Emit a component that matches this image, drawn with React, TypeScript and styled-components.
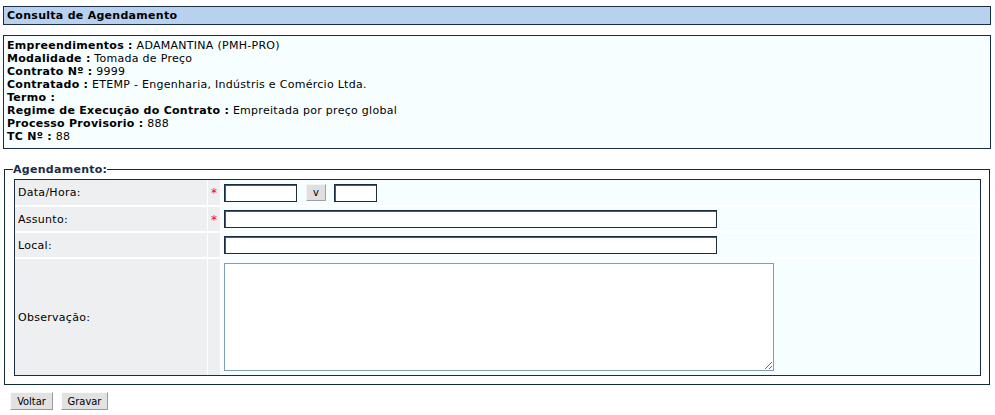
import React from "react";
import styled, { createGlobalStyle } from "styled-components";

const Global = createGlobalStyle`
  html, body { margin: 0; padding: 0; background: #ffffff; }
  body { font-family: "DejaVu Sans", Verdana, sans-serif; font-size: 11px; color: #000; letter-spacing: 0.28px; }
`;

const Page = styled.div`
  padding: 6px 4px 0 3px;
  width: 988px;
`;

const TitleBar = styled.div`
  box-sizing: border-box;
  height: 19px;
  border: 1px solid #1b2d44;
  background: #b8d1ee;
  font-weight: bold;
  font-size: 11px;
  line-height: 17px;
  padding-left: 3px;
`;

const InfoBox = styled.div`
  box-sizing: border-box;
  margin-top: 10px;
  height: 114px;
  border: 1px solid #1b2d44;
  background: #f7feff;
  padding: 3px 3px;
  line-height: 13px;
`;

const InfoLine = styled.div`
  white-space: nowrap;
`;

const Key = styled.b`
  font-weight: bold;
`;

const Fieldset = styled.fieldset`
  box-sizing: border-box;
  margin: 14px 0 0 1px;
  width: 986px;
  border: 1px solid #102c2e;
  padding: 3px 8px 8px 9px;
  min-width: 0;
`;

const Legend = styled.legend`
  font-weight: bold;
  color: #1b2d44;
  padding: 0;
  margin-left: -1px;
`;

const Grid = styled.div`
  box-sizing: border-box;
  border: 1px solid #1b2d44;
  display: grid;
  grid-template-columns: 192px 12px 1fr;
  grid-template-rows: 25px 24px 24px 116px;
  column-gap: 1px;
  row-gap: 2px;
  background: #ffffff;
`;

const LabelCell = styled.div`
  background: #eeeff1;
  display: flex;
  align-items: center;
  padding-left: 3px;
`;

const StarCell = styled.div`
  background: #eeeff1;
  color: #ff0000;
  display: flex;
  align-items: center;
  padding-left: 3px;
  font-size: 12px;
  padding-top: 1px;
  box-sizing: border-box;
`;

const InputCell = styled.div<{ $top?: boolean }>`
  background: #f7feff;
  display: flex;
  align-items: ${(p) => (p.$top ? "flex-start" : "center")};
  padding-left: 3px;
  padding-top: ${(p) => (p.$top ? "4px" : "0")};
  gap: 8px;
`;

const TextInput = styled.input<{ $w: number }>`
  box-sizing: border-box;
  width: ${(p) => p.$w}px;
  height: 18px;
  border: 1px solid #1b2d44;
  box-shadow: inset 1px 1px 0 #4a5a6e;
  background: #fff;
  margin: 0;
  padding: 0 2px;
  font-family: inherit;
  font-size: 11px;
  outline: none;
`;

const SmallButton = styled.button`
  box-sizing: border-box;
  width: 20px;
  height: 17px;
  margin: 0 0 0 1px;
  padding: 0;
  background: #dfdfdf;
  border: 1px solid;
  border-color: #f4f4f4 #a0a0a0 #a0a0a0 #f4f4f4;
  font-family: "DejaVu Sans", Verdana, sans-serif;
  font-size: 10px;
  line-height: 14px;
  color: #000;
`;

const TextArea = styled.textarea`
  box-sizing: border-box;
  width: 550px;
  height: 108px;
  border: 1px solid #7f9db9;
  background: #fff;
  margin: 0;
  padding: 2px;
  resize: both;
  font-family: inherit;
  font-size: 11px;
  outline: none;
`;

const Actions = styled.div`
  display: flex;
  gap: 8px;
  margin: 7px 0 0 7px;
`;

const ActionButton = styled.button<{ $w: number }>`
  box-sizing: border-box;
  width: ${(p) => p.$w}px;
  height: 18px;
  padding: 0;
  background: #e2e2e2;
  border: 1px solid;
  border-color: #fafafa #9a9a9a #9a9a9a #fafafa;
  font-family: "DejaVu Sans Condensed", "DejaVu Sans", sans-serif;
  font-size: 11px;
  letter-spacing: 0;
  line-height: 15px;
  color: #000;
`;

const info: [string, string][] = [
  ["Empreendimentos", "ADAMANTINA (PMH-PRO)"],
  ["Modalidade", "Tomada de Preço"],
  ["Contrato Nº", "9999"],
  ["Contratado", "ETEMP - Engenharia, Indústris e Comércio Ltda."],
  ["Termo", ""],
  ["Regime de Execução do Contrato", "Empreitada por preço global"],
  ["Processo Provisorio", "888"],
  ["TC Nº", "88"],
];

export default function App() {
  return (
    <>
      <Global />
      <Page>
        <TitleBar>Consulta de Agendamento</TitleBar>
        <InfoBox>
          {info.map(([k, v]) => (
            <InfoLine key={k}>
              <Key>{k} :</Key> {v}
            </InfoLine>
          ))}
        </InfoBox>
        <Fieldset>
          <Legend>Agendamento:</Legend>
          <Grid>
            <LabelCell>Data/Hora:</LabelCell>
            <StarCell>*</StarCell>
            <InputCell>
              <TextInput $w={73} />
              <SmallButton type="button">v</SmallButton>
              <TextInput $w={43} />
            </InputCell>

            <LabelCell>Assunto:</LabelCell>
            <StarCell>*</StarCell>
            <InputCell>
              <TextInput $w={493} />
            </InputCell>

            <LabelCell>Local:</LabelCell>
            <StarCell />
            <InputCell>
              <TextInput $w={493} />
            </InputCell>

            <LabelCell>Observação:</LabelCell>
            <StarCell />
            <InputCell $top>
              <TextArea />
            </InputCell>
          </Grid>
        </Fieldset>
        <Actions>
          <ActionButton type="button" $w={43}>Voltar</ActionButton>
          <ActionButton type="button" $w={47}>Gravar</ActionButton>
        </Actions>
      </Page>
    </>
  );
}
